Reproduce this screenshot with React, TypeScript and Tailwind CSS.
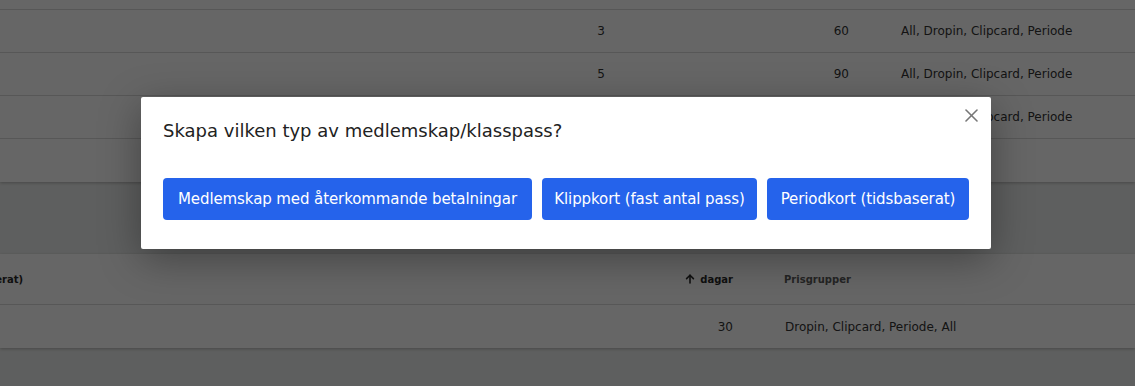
import React from "react";

const font = { fontFamily: '"DejaVu Sans", "Liberation Sans", sans-serif' };

function TopRow({ a, b, c, last }: { a?: string; b?: string; c?: string; last?: boolean }) {
  return (
    <div className={`flex h-[43px] items-center text-[12px] text-[#333] ${last ? "" : "border-b border-[#dadada]"}`}>
      <div className="flex-1 text-right">{a}</div>
      <div className="w-[244px] text-right">{b}</div>
      <div className="w-[286px] pl-[52px] whitespace-nowrap">{c}</div>
    </div>
  );
}

function ArrowUpIcon() {
  return (
    <svg width="10" height="10" viewBox="0 0 10 10" fill="none" stroke="#2a2a2a" strokeWidth="1.6" strokeLinecap="round" strokeLinejoin="round">
      <path d="M5 9V1.2" />
      <path d="M1.6 4.6L5 1.2L8.4 4.6" />
    </svg>
  );
}

const btn =
  "h-[42px] shrink-0 whitespace-nowrap rounded-[4px] bg-[#2563eb] text-center text-[15px] leading-[22px] tracking-[-0.1px] text-white";

export default function App() {
  return (
    <div className="relative h-[386px] w-[1135px] overflow-hidden bg-[#eceeed]" style={font}>
      {/* Top table card (scrolled) */}
      <div className="mt-[-33px] bg-white shadow-[0_1px_3px_rgba(0,0,0,0.25)]">
        <div className="h-[43px] border-b border-[#dadada]" />
        <TopRow a="3" b="60" c="All, Dropin, Clipcard, Periode" />
        <TopRow a="5" b="90" c="All, Dropin, Clipcard, Periode" />
        <TopRow a="" b="" c="All, Dropin, Clipcard, Periode" />
        <TopRow last />
      </div>

      {/* Second table card */}
      <div className="mt-[72px] bg-white shadow-[0_1px_3px_rgba(0,0,0,0.25)]">
        <div className="flex h-[51px] items-center border-b border-[#dadada] text-[10px] font-bold">
          <div className="flex w-[23px] justify-end overflow-hidden whitespace-nowrap text-[#2a2a2a]">
            <span>Periodkort (tidsbaserat)</span>
          </div>
          <div className="flex flex-1 items-center justify-end gap-[5px] text-[#2a2a2a]">
            <ArrowUpIcon />
            <span>dagar</span>
          </div>
          <div className="w-[402px] pl-[51px] text-[#5a5a5a]">Prisgrupper</div>
        </div>
        <div className="flex h-[43px] items-center text-[12px] text-[#333]">
          <div className="w-[23px]" />
          <div className="flex-1 text-right">30</div>
          <div className="w-[402px] pl-[52px] whitespace-nowrap">Dropin, Clipcard, Periode, All</div>
        </div>
      </div>

      {/* Overlay + modal */}
      <div className="absolute inset-0 flex justify-start bg-black/60 pl-[141px] pt-[97px]">
        <div className="relative h-[152px] w-[850px] rounded-[2px] bg-white px-[22px] pt-[20px] shadow-[0_10px_40px_rgba(0,0,0,0.35)]">
          <button className="absolute right-[13px] top-[12px] p-0" aria-label="Stäng">
            <svg width="13" height="13" viewBox="0 0 13 13" fill="none" stroke="#777" strokeWidth="1.6" strokeLinecap="round">
              <path d="M1 1L12 12" />
              <path d="M12 1L1 12" />
            </svg>
          </button>
          <h2 className="text-[18px] leading-[27px] font-normal text-[#222]">
            Skapa vilken typ av medlemskap/klasspass?
          </h2>
          <div className="mt-[34px] flex gap-[10px]">
            <button className={`${btn} w-[369px]`}>Medlemskap med återkommande betalningar</button>
            <button className={`${btn} w-[215px]`}>Klippkort (fast antal pass)</button>
            <button className={`${btn} w-[202px]`}>Periodkort (tidsbaserat)</button>
          </div>
        </div>
      </div>
    </div>
  );
}
